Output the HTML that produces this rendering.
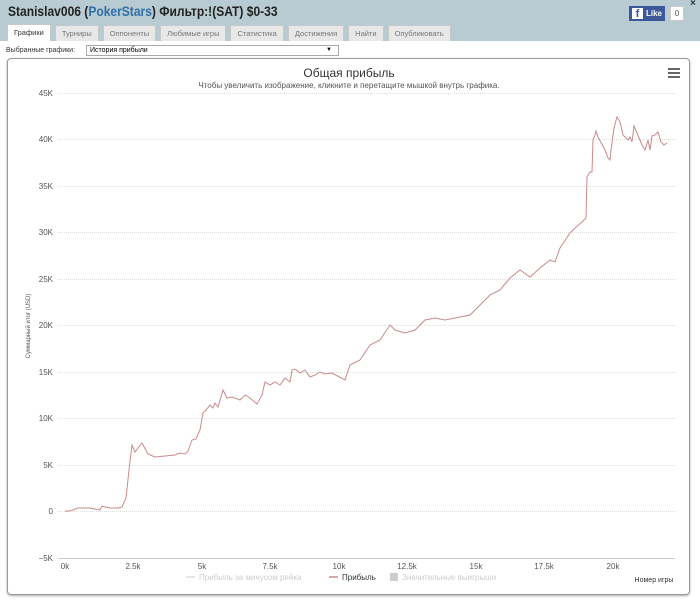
<!DOCTYPE html>
<html><head><meta charset="utf-8"><style>
*{margin:0;padding:0;box-sizing:border-box}
body{width:700px;height:605px;background:#fff;font-family:"Liberation Sans",sans-serif;position:relative;overflow:hidden}
.hdr{position:absolute;left:0;top:0;width:700px;height:41px;background:#b9cbd2}
.title{position:absolute;left:8px;top:3px;font-size:14px;font-weight:bold;color:#222;transform:scaleX(0.86);transform-origin:0 0;white-space:nowrap}
.title span{color:#2f6fa8}
.tabs{position:absolute;left:7px;top:24px;height:17px;display:flex}
.tab{height:16px;margin-right:4px;padding:0 6px;font-size:7.5px;line-height:16px;color:#777;background:#e8e8e8;border:1px solid #c8c8c8;border-bottom:none;margin-top:1px}
.tab.a{background:#fff;color:#333;height:17px;margin-top:0}
.fb{position:absolute;left:629px;top:6px;width:36px;height:15px;background:#3b5998;color:#fff;font-size:8px;font-weight:bold;line-height:15px;padding-left:17px}
.fb:before{content:"f";position:absolute;left:3px;top:2px;width:11px;height:11px;background:#fff;color:#3b5998;font-size:11px;line-height:13px;text-align:center}
.cnt{position:absolute;left:670px;top:6px;width:14px;height:15px;background:#fff;border:1px solid #ccc;font-size:8px;color:#555;text-align:center;line-height:13px}
.x{position:absolute;left:690px;top:-2px;font-size:10px;font-weight:bold;color:#333}
.sel{position:absolute;left:6px;top:47px;font-size:7px;color:#333}
.box{position:absolute;left:86px;top:45px;width:253px;height:11px;border:1px solid #aaa;font-size:7px;padding-left:3px;line-height:9px}
.box:after{content:"▼";position:absolute;right:6px;top:0;font-size:6px}
.chart{position:absolute;left:7px;top:58px;width:683px;height:537px;border:1px solid #999;border-radius:4px;box-shadow:0 1px 2px #aaa}
</style></head><body>
<div class="hdr"></div>
<div class="title">Stanislav006 (<span>PokerStars</span>) Фильтр:!(SAT) $0-33</div>
<div class="tabs"><div class="tab a">Графики</div><div class="tab">Турниры</div><div class="tab">Оппоненты</div><div class="tab">Любимые игры</div><div class="tab">Статистика</div><div class="tab">Достижения</div><div class="tab">Найти</div><div class="tab">Опубликовать</div></div>
<div class="fb">Like</div><div class="cnt">0</div><div class="x">×</div>
<div class="sel">Выбранные графики:</div><div class="box">История прибыли</div>
<div class="chart"></div>
<svg style="position:absolute;left:0;top:0" width="700" height="605" font-family="Liberation Sans, sans-serif">
<text x="349" y="77" font-size="12" fill="#333" text-anchor="middle">Общая прибыль</text>
<text x="349" y="88" font-size="8" fill="#555" text-anchor="middle">Чтобы увеличить изображение, кликните и перетащите мышкой внутрь графика.</text>
<g fill="#666"><rect x="668" y="68" width="12" height="2"/><rect x="668" y="72" width="12" height="2"/><rect x="668" y="76" width="12" height="2"/></g>
<g stroke="#ddd" stroke-dasharray="1,1" stroke-width="1">
<line x1="58" x2="675" y1="93.5" y2="93.5"/><line x1="58" x2="675" y1="139.5" y2="139.5"/><line x1="58" x2="675" y1="186.5" y2="186.5"/><line x1="58" x2="675" y1="232.5" y2="232.5"/><line x1="58" x2="675" y1="279.5" y2="279.5"/><line x1="58" x2="675" y1="325.5" y2="325.5"/><line x1="58" x2="675" y1="372.5" y2="372.5"/><line x1="58" x2="675" y1="418.5" y2="418.5"/><line x1="58" x2="675" y1="465.5" y2="465.5"/><line x1="58" x2="675" y1="511.5" y2="511.5"/></g>
<line x1="58" x2="675" y1="558.5" y2="558.5" stroke="#ccc"/>
<g font-size="8" fill="#555" text-anchor="end">
<text x="53" y="96">45K</text><text x="53" y="142">40K</text><text x="53" y="189">35K</text><text x="53" y="235">30K</text><text x="53" y="282">25K</text><text x="53" y="328">20K</text><text x="53" y="375">15K</text><text x="53" y="421">10K</text><text x="53" y="468">5K</text><text x="53" y="514">0</text><text x="53" y="561">−5K</text></g>
<g font-size="8" fill="#555" text-anchor="middle">
<text x="65" y="569">0k</text><text x="133" y="569">2.5k</text><text x="202" y="569">5k</text><text x="270" y="569">7.5k</text><text x="339" y="569">10k</text><text x="407" y="569">12.5k</text><text x="476" y="569">15k</text><text x="544" y="569">17.5k</text><text x="613" y="569">20k</text></g>
<text x="30" y="326" font-size="6" fill="#555" text-anchor="middle" transform="rotate(-90 30 326)">Суммарный итог (USD)</text>
<text x="654" y="582" font-size="7" fill="#333" text-anchor="middle">Номер игры</text>
<line x1="186" x2="195" y1="577" y2="577" stroke="#ddd" stroke-width="1.5"/>
<text x="199" y="580" font-size="8" fill="#ccc">Прибыль за минусом рейка</text>
<line x1="329" x2="338" y1="577" y2="577" stroke="#c78b8b" stroke-width="1.5"/>
<text x="342" y="580" font-size="8" fill="#333">Прибыль</text>
<rect x="390" y="573" width="8" height="8" fill="#ccc"/>
<text x="402" y="580" font-size="8" fill="#ccc">Значительные выигрыши</text>
<polyline fill="none" stroke="#c98a8a" stroke-width="1" points="65,511 70,511 78,508 90,508 100,510 102,506 105,507 110,508 118,508 122,507 126,498 129,470 132,445 135,452 138,448 142,443 148,454 155,457 165,456 175,455 180,453 185,454 188,451 192,440 196,439 200,430 203,413 206,410 210,405 213,408 215,403 218,407 223,390 227,398 232,397 240,400 245,395 250,398 257,404 262,395 265,382 270,385 275,382 280,385 285,378 290,382 292,370 295,369 300,373 305,370 310,377 315,375 320,372 325,374 332,373 345,380 350,365 360,360 370,345 380,340 390,325 395,330 405,333 415,330 425,320 435,318 445,320 455,318 470,315 480,305 490,295 500,290 510,278 520,270 530,277 540,268 550,260 555,262 560,248 570,233 575,228 582,222 586,218 587,177 590,172 592,172 593,140 595,135 596,131 598,137 605,150 608,158 610,160 611,150 614,128 617,117 620,122 623,135 628,140 630,137 632,142 634,126 637,133 642,145 645,150 648,140 650,150 652,136 655,135 658,132 661,142 664,145 667,143"/>
</svg>
</body></html>
